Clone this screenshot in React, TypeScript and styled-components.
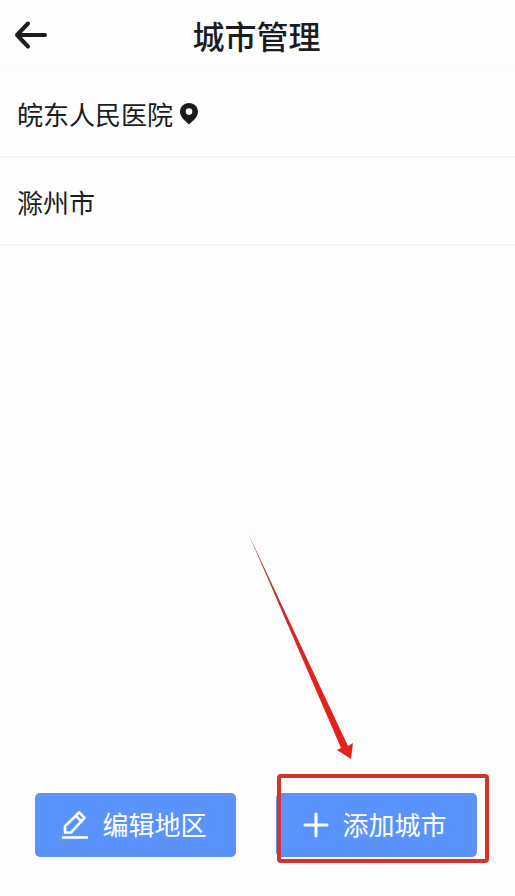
import React from "react";
import styled, { createGlobalStyle } from "styled-components";

const GlobalStyle = createGlobalStyle`
  * {
    box-sizing: border-box;
  }
  body {
    margin: 0;
    background: #fdfdfd;
    color: #1c1c1e;
    font-family: "Noto Sans CJK SC", "Noto Sans", sans-serif;
  }
`;

const Screen = styled.div`
  display: flex;
  flex-direction: column;
  min-height: 100vh;
`;

const Header = styled.header`
  display: grid;
  grid-template-columns: 48px 1fr 50px;
  align-items: center;
  height: 70px;
  border-bottom: 1px solid #f9f9f9;
`;

const BackButton = styled.button`
  display: flex;
  align-items: center;
  justify-content: flex-end;
  height: 48px;
  padding: 0;
  border: 0;
  background: none;
  color: inherit;
  cursor: pointer;
`;

const Title = styled.h1`
  margin: 0;
  font-size: 32px;
  line-height: 40px;
  font-weight: 500;
  text-align: center;
`;

const CityList = styled.ul`
  flex: 1;
  margin: 0;
  padding: 0;
  list-style: none;
`;

const CityRow = styled.li`
  display: flex;
  align-items: center;
  gap: 6px;
  height: 88px;
  padding: 2px 17px 0;
  border-bottom: 2px solid #f5f5f5;
  font-size: 26px;
  line-height: 40px;
`;

const Footer = styled.footer`
  display: grid;
  grid-template-columns: 1fr 1fr;
  gap: 40px;
  padding: 0 38px 39px 35px;
`;

const ActionSlot = styled.div`
  position: relative;
  display: flex;
`;

const ActionButton = styled.button`
  display: flex;
  flex: 1;
  align-items: center;
  justify-content: center;
  gap: 13px;
  height: 64px;
  padding: 0 3px 0 0;
  border: 0;
  border-radius: 5px;
  background: #5b93fd;
  color: #fff;
  font-family: inherit;
  font-size: 26px;
  line-height: 40px;
  white-space: nowrap;
  cursor: pointer;
`;

const ActionLabel = styled.span`
  padding-bottom: 2px;
`;

const Highlight = styled.div`
  position: absolute;
  inset: -19px -12px -6px 1px;
  border: 4px solid #d5322b;
  border-radius: 4px;
  pointer-events: none;
`;

const Pointer = styled.svg`
  position: absolute;
  left: -29px;
  bottom: 97px;
  pointer-events: none;
`;

const BackIcon = () => (
  <svg width="34" height="30" viewBox="0 0 34 30" fill="none" stroke="currentColor" strokeWidth="4" aria-hidden="true">
    <path d="M14 3.500 3 15l11 11.500M3.500 15H31" strokeLinecap="round" strokeLinejoin="round" />
  </svg>
);

const PinIcon = () => (
  <svg width="20" height="22" viewBox="0 0 20 22" aria-hidden="true">
    <path
      fill="currentColor"
      fillRule="evenodd"
      d="M10 0C4.900 0 1 3.900 1 8.800c0 2.900 1.500 5.300 3.400 7.400L10 21.500l5.600-5.300C17.500 14.100 19 11.700 19 8.800 19 3.900 15.100 0 10 0Zm0 5.300a3.300 3.300 0 1 1 0 6.600 3.300 3.300 0 0 1 0-6.600Z"
    />
  </svg>
);

const EditIcon = () => (
  <svg width="28" height="30" viewBox="0 0 28 30" fill="none" stroke="currentColor" strokeWidth="2.600" aria-hidden="true">
    <path d="M4 22.500v-6.300L18.300 2.300l5.200 5.500L10 22.500ZM14.800 5.700l5.200 5.500" strokeLinejoin="round" />
    <path d="M1 27.500h26" />
  </svg>
);

const PlusIcon = () => (
  <svg width="26" height="26" viewBox="0 0 26 26" fill="none" stroke="currentColor" strokeWidth="3" aria-hidden="true">
    <path d="M13 2v22M2 13h22" strokeLinecap="round" />
  </svg>
);

const PointerArrow = () => (
  <Pointer width="108" height="228" viewBox="0 0 108 228" aria-hidden="true">
    <defs>
      <linearGradient id="shaft" x1="0" y1="0" x2="0" y2="1">
        <stop offset="0" stopColor="#a8564f" />
        <stop offset="0.350" stopColor="#c2302b" />
        <stop offset="0.650" stopColor="#e3231a" />
      </linearGradient>
    </defs>
    <path fill="url(#shaft)" d="M1 1 101 214 106 211 104 227 90 218 94 216Z" />
  </Pointer>
);

const cities = [
  { name: "皖东人民医院", located: true },
  { name: "滁州市", located: false },
];

export default function App() {
  return (
    <>
      <GlobalStyle />
      <Screen>
        <Header>
          <BackButton type="button" aria-label="返回">
            <BackIcon />
          </BackButton>
          <Title>城市管理</Title>
        </Header>
        <CityList>
          {cities.map((city) => (
            <CityRow key={city.name}>
              <span>{city.name}</span>
              {city.located && <PinIcon />}
            </CityRow>
          ))}
        </CityList>
        <Footer>
          <ActionSlot>
            <ActionButton type="button">
              <EditIcon />
              <ActionLabel>编辑地区</ActionLabel>
            </ActionButton>
          </ActionSlot>
          <ActionSlot>
            <ActionButton type="button">
              <PlusIcon />
              <ActionLabel>添加城市</ActionLabel>
            </ActionButton>
            <Highlight />
            <PointerArrow />
          </ActionSlot>
        </Footer>
      </Screen>
    </>
  );
}
